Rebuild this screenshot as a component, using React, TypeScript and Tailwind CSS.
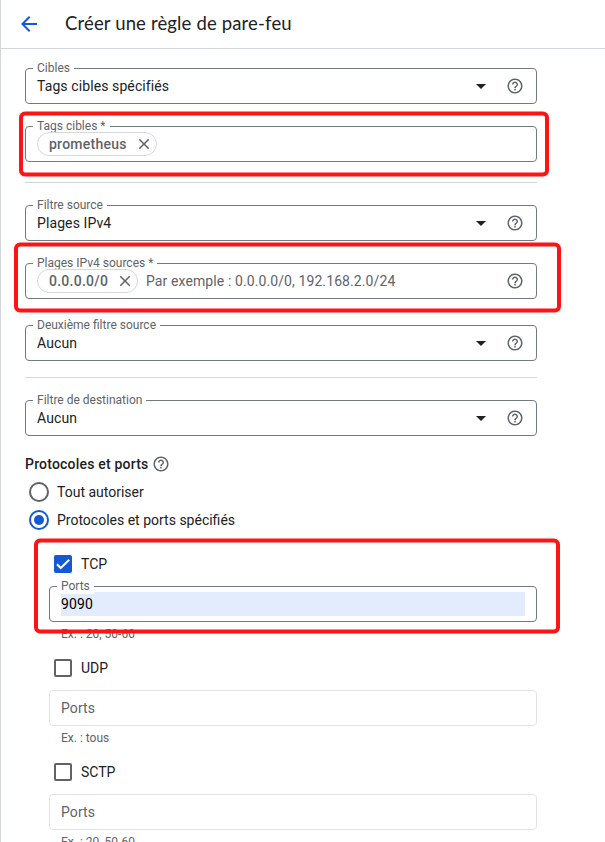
import type { ReactNode } from "react";
import { MdArrowBack, MdClose, MdHelpOutline } from "react-icons/md";

function Field({ label, children }: { label: string; children: ReactNode }) {
  return (
    <div className="relative flex h-9 items-center rounded-[4px] border border-[#747980] pr-[12px] pl-[11px]">
      <div className="absolute -top-[9px] left-[7px] h-4 bg-white px-1 text-xs leading-4 tracking-normal whitespace-nowrap text-[#5f6368]">
        {label}
      </div>
      {children}
    </div>
  );
}

function SelectField({ label, value }: { label: string; value: string }) {
  return (
    <Field label={label}>
      <span className="grow">{value}</span>
      <svg className="mr-[20px] h-[5px] w-[10px]" viewBox="0 0 10 5">
        <path d="M0 0h10L5 5z" fill="#202124" />
      </svg>
      <MdHelpOutline className="size-[18px] text-[#5f6368]" />
    </Field>
  );
}

function Chip({ text, width }: { text: string; width: string }) {
  return (
    <div className={`relative flex h-6 shrink-0 items-center justify-between rounded-full border border-[#d5d7db] pr-[3px] pl-[11px] font-medium text-[#5f6368] ${width}`}>
      <span className="tracking-[0.25px]">{text}</span>
      <MdClose className="size-[18px]" />
    </div>
  );
}

function Radio({ label, checked }: { label: string; checked?: boolean }) {
  return (
    <div className="flex h-7 items-center gap-2 pl-1 tracking-normal">
      <div className={`flex size-5 items-center justify-center rounded-full border-2 ${checked ? "border-[#1558d6]" : "border-[#5f6368]"}`}>
        {checked && <div className="size-[10px] rounded-full bg-[#1558d6]" />}
      </div>
      {label}
    </div>
  );
}

function Check({ label, checked }: { label: string; checked?: boolean }) {
  return (
    <div className="flex h-[18px] items-center gap-[9px] pl-[5px]">
      {checked ? (
        <svg className="size-[18px] rounded-[2px] bg-[#1558d6]" viewBox="0 0 18 18" fill="none">
          <path d="M3 9.3l3.7 3.7L15.2 4.7" stroke="white" strokeWidth="2" />
        </svg>
      ) : (
        <div className="size-[18px] rounded-[2px] border-2 border-[#5f6368]" />
      )}
      <span className="tracking-normal">{label}</span>
    </div>
  );
}

function Hint({ text }: { text: string }) {
  return <div className="mt-1 h-4 pl-3 text-xs leading-4 tracking-normal text-[#5f6368]">{text}</div>;
}

function EmptyPorts() {
  return (
    <div className="mt-[13px] flex h-9 items-center rounded-[4px] border border-[#e3e4e6] pl-[11px] text-[#5f6368]">
      Ports
    </div>
  );
}

export default function App() {
  return (
    <div className="relative h-[842px] w-[605px] overflow-hidden border-l border-[#d3d5dc] bg-white font-['Roboto',sans-serif] text-sm tracking-[0.1px] text-[#202124]">
      <header className="flex h-[49px] items-center gap-6 border-b border-[#d3d5dc] pl-4">
        <MdArrowBack className="size-6 text-[#1558d6]" />
        <h1 className="-mt-[2px] font-['Lato',sans-serif] text-[18.5px] tracking-[0.15px]">Créer une règle de pare-feu</h1>
      </header>

      <main className="ml-6 w-[512px] pt-[19px]">
        <SelectField label="Cibles" value="Tags cibles spécifiés" />
        <div className="mt-[22px]">
          <Field label="Tags cibles *">
            <Chip text="prometheus" width="w-[120px]" />
          </Field>
        </div>
        <div className="mt-5 h-px bg-[#d5d6d8]" />

        <div className="mt-[22px]">
          <SelectField label="Filtre source" value="Plages IPv4" />
        </div>
        <div className="mt-[22px]">
          <Field label="Plages IPv4 sources *">
            <Chip text="0.0.0.0/0" width="w-[101px]" />
            <span className="ml-2 grow whitespace-nowrap text-[#5f6368]">Par exemple : 0.0.0.0/0, 192.168.2.0/24</span>
            <MdHelpOutline className="size-[18px] text-[#5f6368]" />
          </Field>
        </div>
        <div className="mt-[26px]">
          <SelectField label="Deuxième filtre source" value="Aucun" />
        </div>
        <div className="mt-4 h-px bg-[#d5d6d8]" />

        <div className="mt-[22px]">
          <SelectField label="Filtre de destination" value="Aucun" />
        </div>

        <div className="mt-[18px] flex h-5 items-center gap-[3px] font-medium">
          <span className="tracking-[0.2px]">Protocoles et ports</span>
          <MdHelpOutline className="size-[18px] text-[#5f6368]" />
        </div>
        <div className="mt-1">
          <Radio label="Tout autoriser" />
          <Radio label="Protocoles et ports spécifiés" checked />
        </div>

        <div className="pt-[21px] pl-6">
          <Check label="TCP" checked />
          <div className="mt-[13px]">
            <Field label="Ports">
              <div className="-mr-px flex h-6 grow items-center bg-[#e3ecfd] text-black">9090</div>
            </Field>
          </div>
          <Hint text="Ex. : 20, 50-60" />
          <div className="h-[17px]" />
          <Check label="UDP" />
          <EmptyPorts />
          <Hint text="Ex. : tous" />
          <div className="h-[17px]" />
          <Check label="SCTP" />
          <EmptyPorts />
          <Hint text="Ex. : 20, 50-60" />
        </div>
      </main>

      <div className="absolute top-[111px] left-[18px] h-[65px] w-[530px] translate-y-[0.5px] rounded-[6px] border-4 border-[#ff1414]" />
      <div className="absolute top-[242px] left-[13px] h-[70px] w-[547px] translate-y-[0.5px] rounded-[6px] border-4 border-[#ff1414]" />
      <div className="absolute top-[538px] left-[33px] h-[95px] w-[526px] translate-y-[0.5px] rounded-[6px] border-4 border-[#ff1414]" />
    </div>
  );
}
